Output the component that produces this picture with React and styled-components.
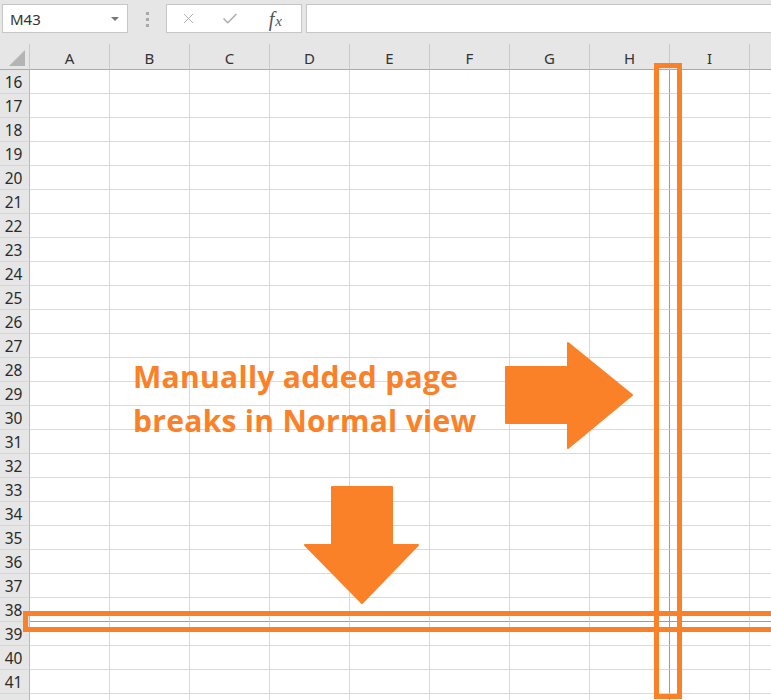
import React from 'react'
import styled, { createGlobalStyle } from 'styled-components'
import { X, Check } from 'lucide-react'

const ORANGE = '#fb8128'
// J and row 42 only peek in at the edges, so they get no labels
const COLUMNS = ['A', 'B', 'C', 'D', 'E', 'F', 'G', 'H', 'I', '']
const ROWS = Array.from({ length: 27 }, (_, i) => 16 + i)
const LAST_ROW = 42
const BREAK_COL = 'H'
const BREAK_ROW = 38

function App() {
    return (
        <>
            <GlobalStyle />
            <Frame>
                <Toolbar>
                    <NameBox>
                        <span>M43</span>
                        <Caret />
                    </NameBox>
                    <Grip>
                        <GripDot />
                        <GripDot />
                        <GripDot />
                    </Grip>
                    <FormulaButtons>
                        <IconSlot $w={44}><X size={17} strokeWidth={1.4} /></IconSlot>
                        <IconSlot $w={40}><Check size={18} strokeWidth={2.2} /></IconSlot>
                        <IconSlot $w={52}><Fx>f<sub>x</sub></Fx></IconSlot>
                    </FormulaButtons>
                    <FormulaInput />
                </Toolbar>

                <Sheet>
                    <Corner><CornerTriangle /></Corner>
                    {COLUMNS.map((c, i) => <ColHeader key={i}>{c}</ColHeader>)}
                    {ROWS.map(r => (
                        <React.Fragment key={r}>
                            <RowHeader>{r === LAST_ROW ? '' : r}</RowHeader>
                            {COLUMNS.map((c, i) => (
                                <Cell key={i} $breakRight={c === BREAK_COL} $breakBottom={r === BREAK_ROW} />
                            ))}
                        </React.Fragment>
                    ))}
                </Sheet>

                <VerticalMark />
                <HorizontalMark />

                <Note>
                    Manually added page<br />
                    breaks in Normal view
                </Note>

                <RightArrow viewBox="0 0 130 109" width="130" height="109">
                    <polygon points="2,26 64,26 64,2 128,54 64,107 64,82 2,82" />
                </RightArrow>
                <DownArrow viewBox="0 0 117 120" width="117" height="120">
                    <polygon points="29,2 89,2 89,60 115,60 59,118 2,60 29,60" />
                </DownArrow>
            </Frame>
        </>
    )
}

export default App

/**Style */

const GlobalStyle = createGlobalStyle`
body{
    margin: 0;
    background: #fff;
    font-family: "Noto Sans", "Open Sans", sans-serif;
}
`
const Frame = styled.div`
position: relative;
width: 771px;
height: 700px;
overflow: hidden;
background: #e6e6e6;
`
const Toolbar = styled.div`
display: flex;
align-items: flex-start;
height: 44px;
padding: 4px 0 0 2px;
box-sizing: border-box;
`
const NameBox = styled.div`
display: flex;
align-items: center;
justify-content: space-between;
width: 126px;
height: 29px;
box-sizing: border-box;
border: 1px solid #c6c6c6;
background: #fff;
padding: 0 8px 0 7px;
font-size: 15px;
color: #333;
`
const Caret = styled.span`
width: 0;
height: 0;
border-left: 4px solid transparent;
border-right: 4px solid transparent;
border-top: 4px solid #777;
`
const Grip = styled.div`
display: flex;
flex-direction: column;
align-items: center;
gap: 3px;
width: 38px;
padding-top: 8px;
`
const GripDot = styled.span`
width: 3px;
height: 3px;
background: #a8a8a8;
`
const FormulaButtons = styled.div`
display: flex;
align-items: center;
width: 136px;
height: 29px;
box-sizing: border-box;
border: 1px solid #c6c6c6;
background: #fff;
`
const IconSlot = styled.div`
display: flex;
align-items: center;
justify-content: center;
width: ${p => p.$w}px;
color: #b0b0b0;
`
const Fx = styled.span`
font-family: "Liberation Serif", serif;
font-style: italic;
font-size: 20px;
color: #555;
line-height: 1;

sub{
    font-size: 15px;
    vertical-align: 0;
    margin-left: 1px;
}
`
const FormulaInput = styled.div`
flex: 1;
height: 29px;
margin: 0 -10px 0 4px;
box-sizing: border-box;
border: 1px solid #c6c6c6;
background: #fff;
`
const Sheet = styled.div`
display: grid;
grid-template-columns: 30px repeat(10, 80px);
grid-template-rows: 26px;
grid-auto-rows: 24px;
`
const Corner = styled.div`
position: relative;
border-right: 1px solid #c8c8c8;
border-bottom: 1px solid #ababab;
`
const CornerTriangle = styled.span`
position: absolute;
right: 4px;
bottom: 3px;
width: 0;
height: 0;
border-left: 16px solid transparent;
border-bottom: 16px solid #b4b4b4;
`
const ColHeader = styled.div`
display: flex;
align-items: center;
justify-content: center;
border-right: 1px solid #c8c8c8;
border-bottom: 1px solid #ababab;
font-size: 15px;
color: #333;
padding-top: 2px;
`
const RowHeader = styled.div`
display: flex;
align-items: center;
justify-content: center;
border-right: 1px solid #b8b8b8;
border-bottom: 1px solid #d6d6d6;
background: #e6e6e6;
font-size: 15.5px;
color: #2a2a2a;
padding-right: 2px;
`
const Cell = styled.div`
background: #fff;
border-right: 1px solid ${p => (p.$breakRight ? '#9c9c9c' : '#d9d9d9')};
border-bottom: 1px solid ${p => (p.$breakBottom ? '#9c9c9c' : '#d9d9d9')};
`
const VerticalMark = styled.div`
position: absolute;
left: 654px;
top: 63px;
width: 28px;
height: 636px;
box-sizing: border-box;
border: 5px solid ${ORANGE};
`
const HorizontalMark = styled.div`
position: absolute;
left: 23px;
top: 611px;
width: 770px;
height: 21px;
box-sizing: border-box;
border: 5px solid ${ORANGE};
`
const Note = styled.div`
position: absolute;
left: 133px;
top: 355px;
font-family: "Open Sans", Lato, sans-serif;
font-weight: 700;
font-size: 30px;
letter-spacing: 0.3px;
line-height: 44px;
color: ${ORANGE};
white-space: nowrap;
`
const RightArrow = styled.svg`
position: absolute;
left: 504px;
top: 341px;

polygon{
    fill: ${ORANGE};
    stroke: ${ORANGE};
    stroke-width: 2;
    stroke-linejoin: round;
}
`
const DownArrow = styled.svg`
position: absolute;
left: 303px;
top: 485px;

polygon{
    fill: ${ORANGE};
    stroke: ${ORANGE};
    stroke-width: 2;
    stroke-linejoin: round;
}
`
/****/
